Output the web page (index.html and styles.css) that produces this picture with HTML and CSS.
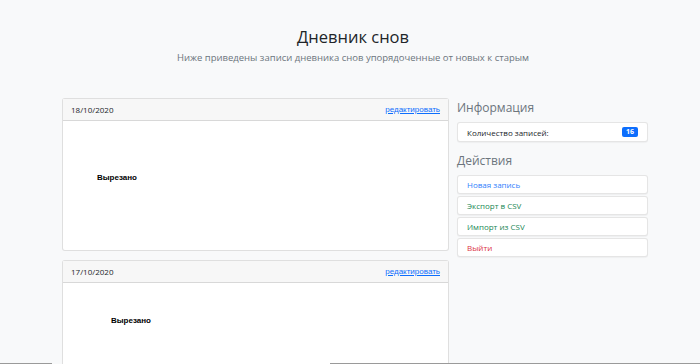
FILE: index.html
```html
<!DOCTYPE html>
<html lang="ru">
<head>
<meta charset="utf-8">
<title>Дневник снов</title>
<link rel="stylesheet" href="styles.css">
</head>
<body>
<header class="hero">
  <h1 class="hero-title">Дневник снов</h1>
  <p class="hero-lead">Ниже приведены записи дневника снов упорядоченные от новых к старым</p>
</header>
<main class="layout">
  <section class="entries">
    <article class="card">
      <div class="card-header">
        <span class="card-date">18/10/2020</span>
        <a class="card-edit" href="#">редактировать</a>
      </div>
      <div class="card-body body-one">
        <b class="cut">Вырезано</b>
      </div>
    </article>
    <article class="card">
      <div class="card-header">
        <span class="card-date">17/10/2020</span>
        <a class="card-edit" href="#">редактировать</a>
      </div>
      <div class="card-body body-two">
        <b class="cut">Вырезано</b>
      </div>
    </article>
  </section>
  <aside class="sidebar">
    <h2 class="side-title">Информация</h2>
    <div class="list">
      <div class="list-item info-item">
        <span>Количество записей:</span>
        <span class="badge">16</span>
      </div>
    </div>
    <h2 class="side-title side-title-2">Действия</h2>
    <div class="list actions">
      <a class="list-item link-blue" href="#">Новая запись</a>
      <a class="list-item link-green" href="#">Экспорт в CSV</a>
      <a class="list-item link-green" href="#">Импорт из CSV</a>
      <a class="list-item link-red" href="#">Выйти</a>
    </div>
  </aside>
</main>
<div class="bottom-line line-left"></div>
<div class="bottom-line line-right"></div>
</body>
</html>
```
FILE: styles.css
```css
html, body {
  margin: 0;
  padding: 0;
}
body {
  background: #f8f9fa;
  font-family: "Open Sans", "Noto Sans", sans-serif;
  color: #212529;
  height: 364px;
  overflow: hidden;
  position: relative;
}
.hero {
  text-align: center;
  padding-top: 26px;
  padding-left: 6px;
}
.hero-title {
  margin: 0;
  font-size: 16.5px;
  line-height: 22px;
  font-weight: 400;
  color: #212529;
}
.hero-lead {
  margin: 3px 0 0;
  font-size: 9.5px;
  line-height: 13px;
  color: #6c757d;
  font-weight: 400;
}
.layout {
  display: grid;
  grid-template-columns: 387px 191px;
  column-gap: 8px;
  padding-left: 62px;
  margin-top: 34px;
}
.entries {
  display: flex;
  flex-direction: column;
  gap: 9px;
}
.card {
  background: #fff;
  border: 1px solid rgba(0,0,0,0.125);
  border-radius: 3px;
}
.card-header {
  display: flex;
  justify-content: space-between;
  align-items: center;
  height: 21px;
  padding: 0 8px;
  background: #f7f7f7;
  border-bottom: 1px solid rgba(0,0,0,0.125);
  font-size: 8px;
}
.card-date {
  color: #212529;
}
.card-edit {
  color: #0d6efd;
  text-decoration: underline;
  font-family: "Liberation Sans", Arial, sans-serif;
  font-size: 8px;
}
.card-body {
  height: 129px;
}
.cut {
  font-family: "Liberation Sans", Arial, sans-serif;
  font-size: 8px;
  font-weight: 700;
  color: #000;
  display: block;
}
.body-one {
  padding: 52px 0 0 34px;
  box-sizing: border-box;
}
.body-two {
  padding: 33px 0 0 48px;
  box-sizing: border-box;
}
.sidebar {
  padding-top: 2px;
}
.side-title {
  margin: 0;
  font-size: 12px;
  line-height: 16px;
  font-weight: 400;
  color: #6c757d;
}
.side-title-2 {
  margin-top: 11px;
}
.list {
  display: flex;
  flex-direction: column;
  margin-top: 6px;
}
.actions {
  gap: 2px;
  margin-top: 6px;
}
.list-item {
  box-sizing: border-box;
  display: flex;
  align-items: center;
  height: 19px;
  padding: 0 9px;
  background: #fff;
  border: 1px solid rgba(0,0,0,0.1);
  border-radius: 3px;
  font-size: 8px;
  text-decoration: none;
  box-shadow: 0 1px 1px rgba(0,0,0,0.04);
}
.info-item {
  height: 20px;
  justify-content: space-between;
  color: #212529;
}
.badge {
  background: #0d6efd;
  color: #fff;
  font-weight: 700;
  font-size: 7px;
  line-height: 10px;
  padding: 0 4px;
  border-radius: 2px;
}
.link-blue { color: #2f7ffd; }
.link-green { color: #198754; }
.link-red { color: #dc3545; }
.bottom-line {
  position: absolute;
  bottom: 0;
  height: 1px;
  background: #9a9a9a;
}
.line-left {
  left: 0;
  width: 52px;
}
.line-right {
  left: 330px;
  right: 0;
}
```
